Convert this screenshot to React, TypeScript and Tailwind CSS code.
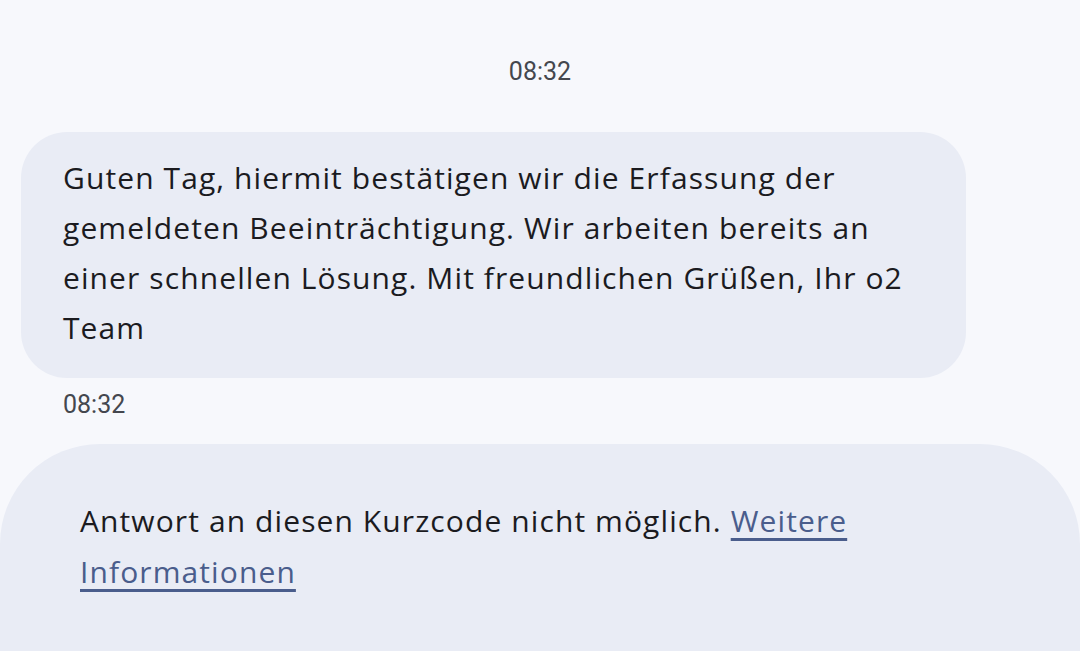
export default function App() {
  const body = "text-[30px] leading-[50px] text-[#1b1b1f] tracking-[1.1px] whitespace-nowrap";
  return (
    <div
      className="w-[1080px] h-[651px] overflow-hidden bg-[#f7f8fc] flex flex-col"
      style={{ fontFamily: "'Open Sans', 'Noto Sans', sans-serif" }}
    >
      <div
        className="pt-[56px] text-center text-[25px] leading-[32px] text-[#44474e]"
        style={{ fontFamily: "Roboto, sans-serif" }}
      >
        08:32
      </div>

      <div className="mt-[44px] ml-[21px] w-[945px] rounded-[46px] bg-[#e9ecf5] pl-[42px] pr-[40px] pt-[21px] pb-[25px]">
        <p className={body}>
          Guten Tag, hiermit bestätigen wir die Erfassung der
          <br />
          gemeldeten Beeinträchtigung. Wir arbeiten bereits an
          <br />
          einer schnellen Lösung. Mit freundlichen Grüßen, Ihr o2
          <br />
          Team
        </p>
      </div>

      <div
        className="mt-[11px] pl-[63px] text-[25px] leading-[32px] text-[#44474e]"
        style={{ fontFamily: "Roboto, sans-serif" }}
      >
        08:32
      </div>

      <div className="mt-[23px] flex-1 rounded-t-[100px] bg-[#e9ecf5] pl-[80px] pr-[60px] pt-[51px]">
        <p className="text-[30px] leading-[51px] text-[#1b1b1f] tracking-[1.1px] whitespace-nowrap">
          Antwort an diesen Kurzcode nicht möglich.{" "}
          <a className="text-[#4a5d8c] underline decoration-[3px] underline-offset-[6px] decoration-[#4a5d8c]">
            Weitere
            <br />
            Informationen
          </a>
        </p>
      </div>
    </div>
  );
}
